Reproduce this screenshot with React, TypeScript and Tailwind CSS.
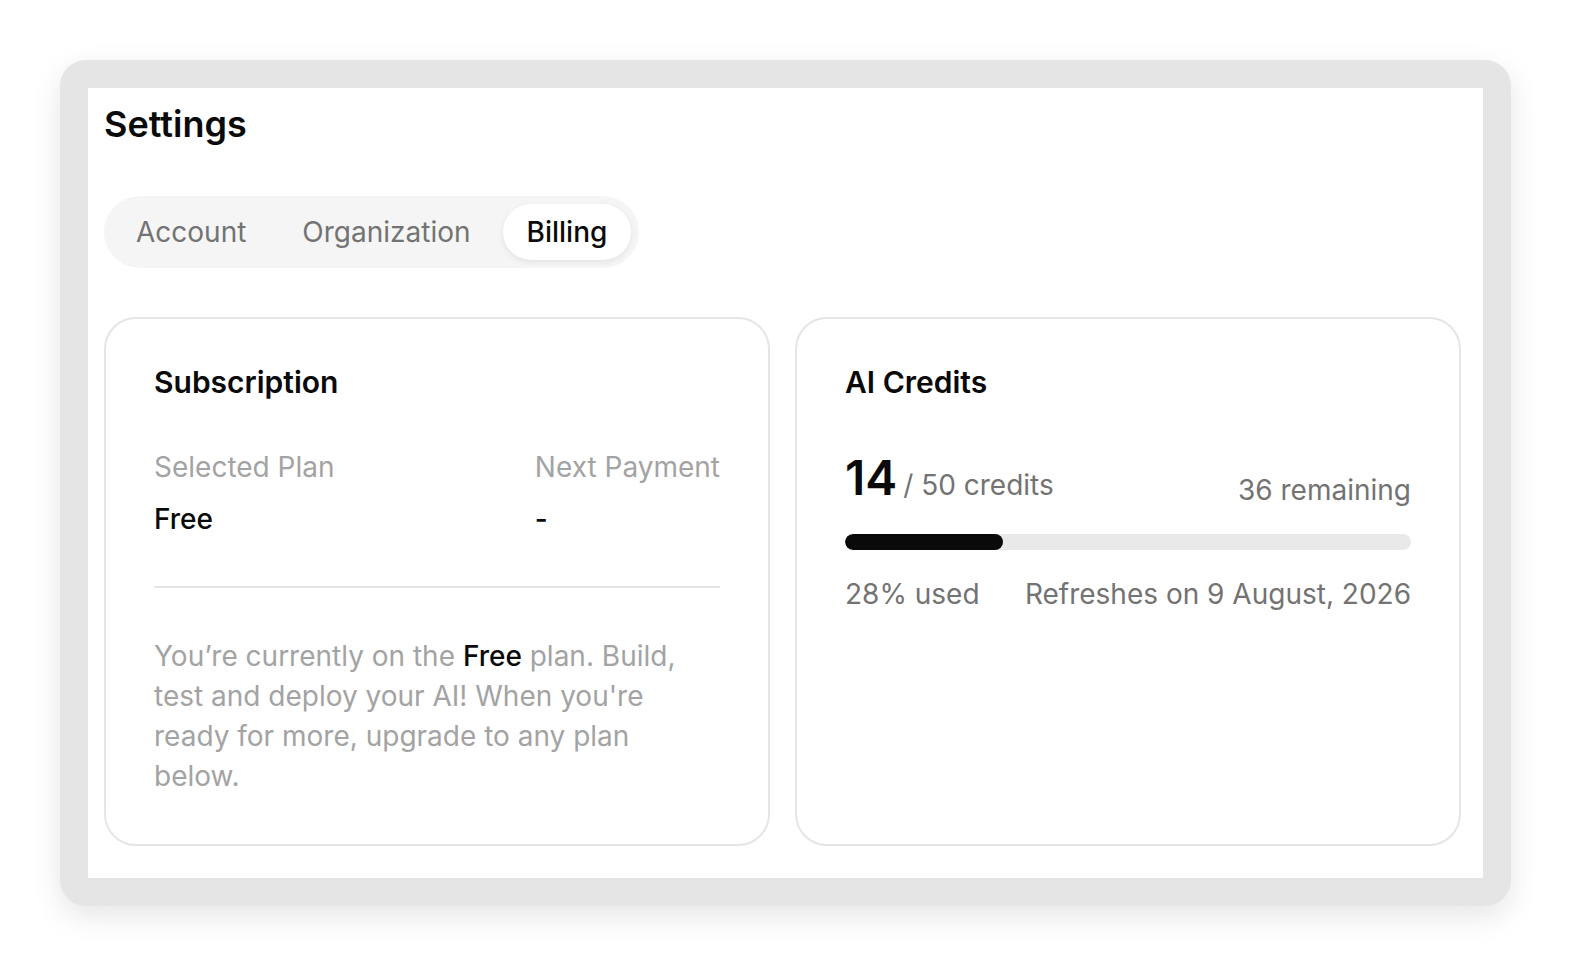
import React from "react";

export default function App() {
  const used = 14;
  const total = 50;
  const pct = Math.round((used / total) * 100);
  return (
    <div
      className="min-h-screen bg-white p-[60px]"
      style={{ fontFamily: "Inter, 'Noto Sans', sans-serif" }}
    >
      <div className="w-full rounded-[26px] bg-[#e5e5e5] p-[28px] shadow-[0_10px_30px_rgba(0,0,0,0.10)]">
        <div className="bg-white pl-4 pr-[22px] pt-[14px] pb-8">
          <h1 className="text-[36px] leading-[44px] font-semibold text-[#0a0a0a]">Settings</h1>

          <div className="mt-[50px] inline-flex h-[72px] items-center gap-2 rounded-full bg-[#f5f5f5] p-2">
            <div className="flex h-[56px] items-center rounded-full px-6 text-[28px] leading-[40px] text-[#737373]">
              Account
            </div>
            <div className="flex h-[56px] items-center rounded-full px-6 text-[28px] leading-[40px] text-[#737373]">
              Organization
            </div>
            <div className="flex h-[56px] items-center rounded-full bg-white px-6 text-[28px] leading-[40px] font-medium text-[#0a0a0a] shadow-[0_2px_6px_rgba(0,0,0,0.08)]">
              Billing
            </div>
          </div>

          <div className="mt-[49px] grid grid-cols-2 gap-[25px]">
            {/* Subscription card */}
            <div className="rounded-[32px] border-2 border-[#e5e5e5] p-12">
              <h2 className="text-[30px] leading-[30px] font-semibold text-[#0a0a0a]">Subscription</h2>
              <div className="mt-[50px] flex justify-between text-[28px] leading-[40px]">
                <div>
                  <div className="text-[#a3a3a3]">Selected Plan</div>
                  <div className="mt-[12px] font-medium text-[#0a0a0a]">Free</div>
                </div>
                <div>
                  <div className="text-[#a3a3a3]">Next Payment</div>
                  <div className="mt-[12px] font-medium text-[#0a0a0a]">-</div>
                </div>
              </div>
              <div className="mt-[47px] h-[2px] bg-[#e5e5e5]" />
              <p className="mt-12 text-[28px] leading-[40px] text-[#a3a3a3]">
                You’re currently on the <span className="font-medium text-[#0a0a0a]">Free</span> plan. Build,
                test and deploy your AI! When you're ready for more, upgrade to any plan below.
              </p>
            </div>

            {/* AI Credits card */}
            <div className="rounded-[32px] border-2 border-[#e5e5e5] p-12">
              <h2 className="text-[30px] leading-[30px] font-semibold text-[#0a0a0a]">AI Credits</h2>
              <div className="mt-[49px] flex items-end justify-between">
                <div className="h-[64px] text-[48px] leading-[64px]">
                  <span className="font-semibold text-[#0a0a0a]">{used}</span>
                  <span className="ml-[6px] text-[28px] leading-none text-[#737373]">/ {total} credits</span>
                </div>
                <div className="text-[28px] leading-[40px] text-[#737373]">{total - used} remaining</div>
              </div>
              <div className="mt-6 h-4 w-full overflow-hidden rounded-full bg-[#e9e9e9]">
                <div className="h-full rounded-full bg-[#0a0a0a]" style={{ width: `${pct}%` }} />
              </div>
              <div className="mt-6 flex justify-between text-[28px] leading-[40px] text-[#737373]">
                <span>{pct}% used</span>
                <span>Refreshes on 9 August, 2026</span>
              </div>
            </div>
          </div>
        </div>
      </div>
    </div>
  );
}
